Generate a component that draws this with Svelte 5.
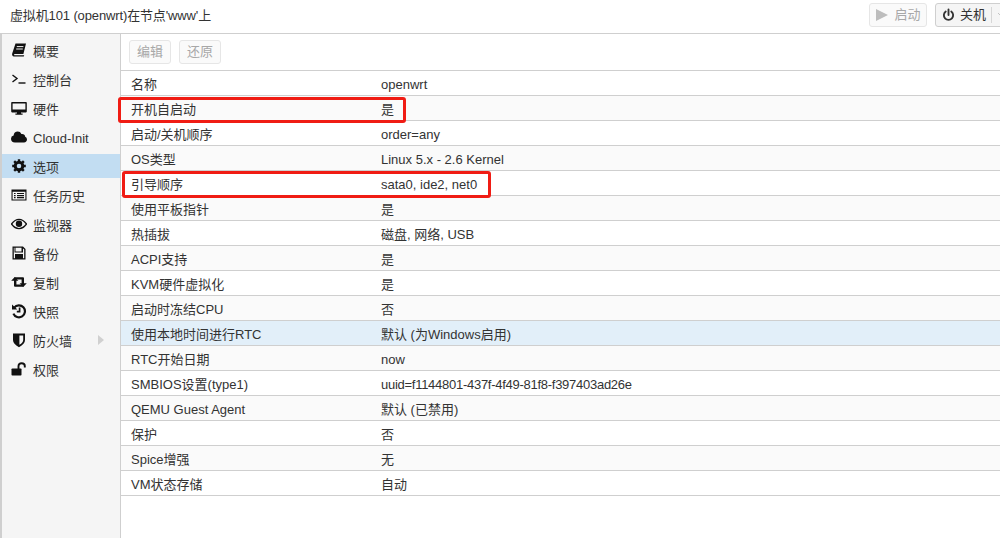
<script>
	const menu = [
		{ label: '概要', icon: 'book' },
		{ label: '控制台', icon: 'term' },
		{ label: '硬件', icon: 'desktop' },
		{ label: 'Cloud-Init', icon: 'cloud' },
		{ label: '选项', icon: 'gear', active: true },
		{ label: '任务历史', icon: 'list' },
		{ label: '监视器', icon: 'eye' },
		{ label: '备份', icon: 'save' },
		{ label: '复制', icon: 'retweet' },
		{ label: '快照', icon: 'history' },
		{ label: '防火墙', icon: 'shield', arrow: true },
		{ label: '权限', icon: 'unlock' }
	];

	const rows = [
		{ name: '名称', value: 'openwrt' },
		{ name: '开机自启动', value: '是' },
		{ name: '启动/关机顺序', value: 'order=any' },
		{ name: 'OS类型', value: 'Linux 5.x - 2.6 Kernel' },
		{ name: '引导顺序', value: 'sata0, ide2, net0' },
		{ name: '使用平板指针', value: '是' },
		{ name: '热插拔', value: '磁盘, 网络, USB' },
		{ name: 'ACPI支持', value: '是' },
		{ name: 'KVM硬件虚拟化', value: '是' },
		{ name: '启动时冻结CPU', value: '否' },
		{ name: '使用本地时间进行RTC', value: '默认 (为Windows启用)', hover: true },
		{ name: 'RTC开始日期', value: 'now' },
		{ name: 'SMBIOS设置(type1)', value: 'uuid=f1144801-437f-4f49-81f8-f397403ad26e', tight: true },
		{ name: 'QEMU Guest Agent', value: '默认 (已禁用)' },
		{ name: '保护', value: '否' },
		{ name: 'Spice增强', value: '无' },
		{ name: 'VM状态存储', value: '自动' }
	];
</script>

<div class="page">
	<header class="top">
		<div class="title">虚拟机101 (openwrt)在节点'www'上</div>
		<div class="actions">
			<button class="btn off start">
				<svg width="14" height="14" viewBox="0 0 14 14"><path d="M1 1 L13 7 L1 13 Z" fill="#bdbdbd" /></svg>
				启动
			</button>
			<button class="btn split">
				<svg width="13" height="14" viewBox="0 0 14 14" fill="none" stroke="#333" stroke-width="2" stroke-linecap="round"><path d="M4 3.2 A5 5 0 1 0 10 3.2" /><path d="M7 1 V7" /></svg>
				关机
				<span class="sep"></span>
				<svg class="chev" width="10" height="6" viewBox="0 0 10 6" fill="none" stroke="#c4c4c4" stroke-width="1"><path d="M1 1 L5 5 L9 1" /></svg>
			</button>
		</div>
	</header>

	<div class="body">
		<nav class="side">
			{#each menu as item}
				<div class="item" class:active={item.active}>
					<svg class="ico" width="16" height="16" viewBox="0 0 16 16">
						{#if item.icon === 'book'}
							<path d="M4.5 1.5 H15 L12.4 12 H3.6 Q2.6 12.6 3.3 13.2 H13.2 L12.8 14.6 H3 Q0.6 14 1.2 11.5 Z" fill="#111" />
							<path d="M5.8 4.6 H12.4 M5.2 7 H11.8" stroke="#f5f5f5" stroke-width="1" />
						{:else if item.icon === 'term'}
							<path d="M1.5 4 L6 7.5 L1.5 11" fill="none" stroke="#111" stroke-width="1.4" />
							<path d="M7.5 12 H14.5" stroke="#111" stroke-width="1.4" />
						{:else if item.icon === 'desktop'}
							<path fill-rule="evenodd" d="M1 2 H15 Q15.8 2 15.8 2.8 V11.6 Q15.8 12.4 15 12.4 H10 V13.6 H11.6 V14.8 H4.4 V13.6 H6 V12.4 H1 Q0.2 12.4 0.2 11.6 V2.8 Q0.2 2 1 2 Z M1.6 3.4 V9.6 H14.4 V3.4 Z" fill="#111" />
						{:else if item.icon === 'cloud'}
							<path d="M4 13.4 Q0 13.4 0 9.8 Q0 7.2 2.6 6.6 Q3 2.6 6.8 2.6 Q9.4 2.6 10.4 5 Q13.8 4.6 14.2 7.8 Q16 8.6 16 10.6 Q15.8 13.4 13 13.4 Z" fill="#111" />
						{:else if item.icon === 'gear'}
							<circle cx="8" cy="8" r="3.8" fill="none" stroke="#111" stroke-width="3" />
							<path d="M8 1.2 V14.8 M1.2 8 H14.8 M3.2 3.2 L12.8 12.8 M12.8 3.2 L3.2 12.8" stroke="#111" stroke-width="2.4" stroke-dasharray="2.6 8.4 2.6" />
						{:else if item.icon === 'list'}
							<path fill-rule="evenodd" d="M0.5 2.5 H15.5 V13.5 H0.5 Z M1.6 4.8 V12.4 H14.4 V4.8 Z" fill="#111" />
							<path d="M3 6.5 H4.6 M6 6.5 H13 M3 8.6 H4.6 M6 8.6 H13 M3 10.7 H4.6 M6 10.7 H13" stroke="#111" stroke-width="1.2" />
						{:else if item.icon === 'eye'}
							<path d="M0.5 8 Q4 3.4 8 3.4 Q12 3.4 15.5 8 Q12 12.6 8 12.6 Q4 12.6 0.5 8 Z" fill="none" stroke="#111" stroke-width="1.3" />
							<circle cx="8" cy="7.8" r="3.2" fill="#111" />
						{:else if item.icon === 'save'}
							<path fill-rule="evenodd" d="M2 1.5 H12 L14.5 4 V14.5 H1.5 V1.5 Z M4.5 2.8 V6.5 H10.5 V2.8 Z M2.8 2.8 V13.2 H4 V9 H12 V13.2 H13.2 V4.6 L12 3.4 V7.5 H3.5 V2.8 Z" fill="#111" />
						{:else if item.icon === 'retweet'}
							<path d="M0.2 6.8 L3.8 3 L7.4 6.8 H5.4 V10.6 H11 L12.8 12.8 H4 Q3 12.8 3 11.8 V6.8 Z" fill="#111" />
							<path d="M15.8 9.2 L12.2 13 L8.6 9.2 H10.6 V5.4 H5 L3.2 3.2 H12 Q13 3.2 13 4.2 V9.2 Z" fill="#111" />
						{:else if item.icon === 'history'}
							<path d="M3.2 4.6 A6 6 0 1 1 2.4 10.6" fill="none" stroke="#111" stroke-width="2.2" />
							<path d="M1 1.4 L6.4 6.6 H1 Z" fill="#111" />
							<path d="M8.6 4.6 V8.6 H5.8" fill="none" stroke="#111" stroke-width="1.7" />
						{:else if item.icon === 'shield'}
							<path fill-rule="evenodd" d="M2 1.6 H14 V8 Q14 12 8 15.2 Q2 12 2 8 Z M8.4 3.4 V12.8 Q12.2 10.6 12.2 8 V3.4 Z" fill="#111" />
						{:else if item.icon === 'unlock'}
							<rect x="0.5" y="7.5" width="10" height="7" rx="0.8" fill="#111" />
							<path d="M7.5 8 V5 Q7.5 2.2 10.6 2.2 Q13.8 2.2 13.8 5 V6.6" fill="none" stroke="#111" stroke-width="1.9" />
						{/if}
					</svg>
					<span class="label">{item.label}</span>
					{#if item.arrow}
						<span class="arrow"></span>
					{/if}
				</div>
			{/each}
		</nav>

		<main class="content">
			<div class="toolbar">
				<button class="btn off small">编辑</button>
				<button class="btn off small">还原</button>
			</div>
			<div class="grid">
				{#each rows as row}
					<div class="row" class:hover={row.hover}>
						<div class="name">{row.name}</div>
						<div class="value" class:tight={row.tight}>{row.value}</div>
					</div>
				{/each}
			</div>
		</main>
	</div>

	<div class="mark first"></div>
	<div class="mark second"></div>
</div>

<style>
	:global(body) {
		margin: 0;
		background: #fff;
	}

	.page {
		position: relative;
		width: 1000px;
		height: 538px;
		overflow: hidden;
		font-family: 'Liberation Sans', 'Noto Sans CJK SC', sans-serif;
		font-size: 13px;
		line-height: 16px;
		color: #333;
	}

	.top {
		height: 33px;
		box-sizing: border-box;
		display: flex;
		align-items: center;
		justify-content: space-between;
		padding-left: 10px;
	}

	.title {
		letter-spacing: -0.13px;
		margin-top: -2px;
	}

	.actions {
		display: flex;
		gap: 8px;
		margin-right: -21px;
		margin-top: -3px;
	}

	.btn {
		font: inherit;
		height: 24px;
		box-sizing: border-box;
		border: 1px solid #cfcfcf;
		border-radius: 3px;
		background: #f5f5f5;
		color: #333;
		display: flex;
		align-items: center;
		gap: 5px;
		padding: 0 6px;
		white-space: nowrap;
	}

	.btn.off {
		color: #a8a8a8;
		background: #fafafa;
		border-color: #e6e6e6;
	}

	.btn.start {
		width: 58px;
		flex: none;
		justify-content: center;
		padding: 0;
	}

	.btn.small {
		width: 42px;
		padding: 0;
		justify-content: center;
	}

	.btn.split {
		width: 86px;
		flex: none;
	}

	.sep {
		width: 1px;
		height: 16px;
		flex: none;
		background: #d6d6d6;
	}

	.chev {
		flex: none;
	}

	.body {
		display: flex;
		height: 505px;
		border-top: 1px solid #cfcfcf;
	}

	.side {
		width: 121px;
		flex: none;
		box-sizing: border-box;
		background: #f5f5f5;
		border-left: 2px solid #cfcfcf;
		border-right: 1px solid #cfcfcf;
		padding-top: 4px;
		display: flex;
		flex-direction: column;
		gap: 5px;
	}

	.item {
		height: 24px;
		display: flex;
		align-items: center;
		padding-left: 9px;
		position: relative;
	}

	.item.active {
		background: #c2ddf2;
	}

	.ico {
		flex: none;
	}

	.label {
		margin-left: 6px;
		padding-top: 4px;
	}

	.arrow {
		position: absolute;
		left: 96px;
		top: 7px;
		border-left: 6px solid #d0d0d0;
		border-top: 5px solid transparent;
		border-bottom: 5px solid transparent;
	}

	.content {
		flex: 1;
		min-width: 0;
	}

	.toolbar {
		height: 37px;
		box-sizing: border-box;
		border-bottom: 1px solid #cfcfcf;
		display: flex;
		align-items: center;
		gap: 8px;
		padding-left: 8px;
	}

	.row {
		height: 25px;
		box-sizing: border-box;
		border-bottom: 1px solid #cfcfcf;
		padding-top: 4px;
		display: flex;
		align-items: center;
		background: #fff;
	}

	.row:nth-child(even) {
		background: #fafafa;
	}

	.row.hover {
		background: #e2eff9;
	}

	.name {
		width: 260px;
		padding-left: 10px;
		box-sizing: border-box;
	}

	.value.tight {
		letter-spacing: -0.27px;
	}

	.mark {
		position: absolute;
		box-sizing: border-box;
		border: 3px solid #f01c14;
		border-radius: 3px;
	}

	.first {
		left: 118px;
		top: 97px;
		width: 288px;
		height: 26px;
	}

	.second {
		left: 122px;
		top: 171px;
		width: 369px;
		height: 27px;
	}
</style>
